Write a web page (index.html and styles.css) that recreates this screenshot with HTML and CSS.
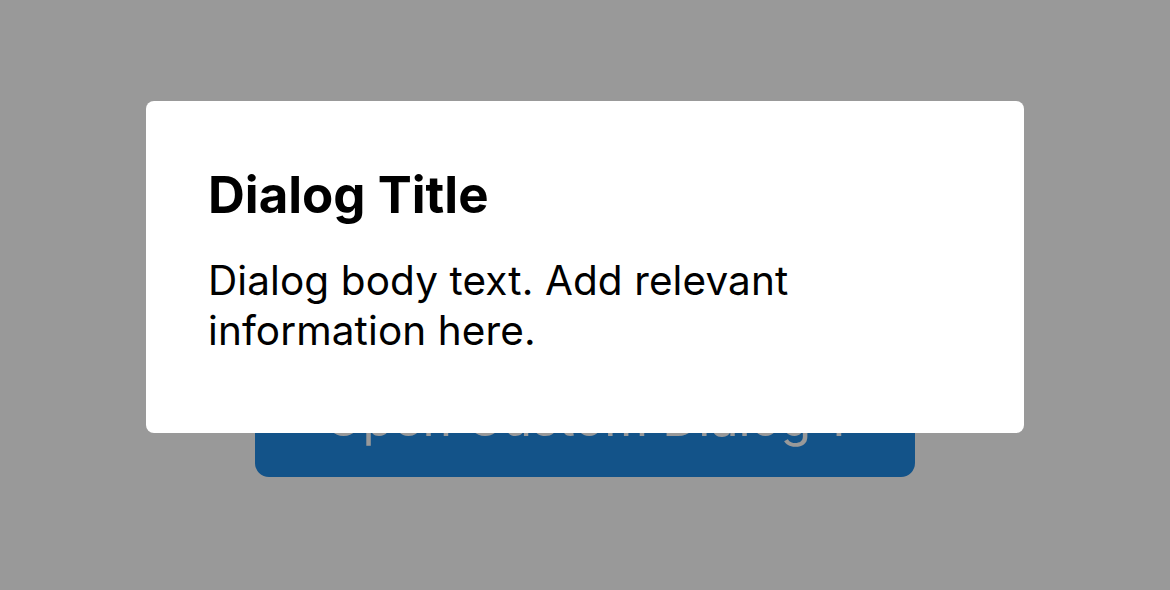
FILE: index.html
```html
<!DOCTYPE html>
<html lang="en">
<head>
<meta charset="utf-8">
<title>Custom Dialog</title>
<link rel="stylesheet" href="styles.css">
</head>
<body>
<main class="page">
  <button class="open-btn" type="button">Open Custom Dialog 1</button>
</main>
<div class="overlay">
  <div class="dialog" role="dialog" aria-labelledby="dlg-title">
    <h2 class="dialog-title" id="dlg-title">Dialog Title</h2>
    <p class="dialog-body">Dialog body text. Add relevant information here.</p>
  </div>
</div>
</body>
</html>
```

FILE: styles.css
```css
html, body {
  margin: 0;
  padding: 0;
  height: 100%;
}
body {
  background: #ffffff;
  font-family: Inter, "Noto Sans", "Liberation Sans", sans-serif;
}
.page {
  height: 100%;
  display: flex;
  justify-content: center;
  align-items: flex-start;
  padding-top: 359px;
  box-sizing: border-box;
}
.open-btn {
  width: 660px;
  height: 118px;
  border: none;
  border-radius: 14px;
  background: #208ae5;
  color: #ffffff;
  font-family: inherit;
  font-size: 50px;
  padding: 0;
}
.overlay {
  position: fixed;
  inset: 0;
  background: rgba(0, 0, 0, 0.4);
  display: flex;
  justify-content: center;
  align-items: flex-start;
  padding-top: 101px;
}
.dialog {
  width: 878px;
  height: 332px;
  box-sizing: border-box;
  background: #ffffff;
  border-radius: 8px;
  padding: 64px 62px 0 62px;
}
.dialog-title {
  margin: 0;
  font-size: 51px;
  font-weight: 700;
  line-height: 60px;
  color: #000000;
}
.dialog-body {
  margin: 31px 0 0 0;
  font-size: 40.5px;
  letter-spacing: 0.1px;
  line-height: 50px;
  color: #000000;
}
```
